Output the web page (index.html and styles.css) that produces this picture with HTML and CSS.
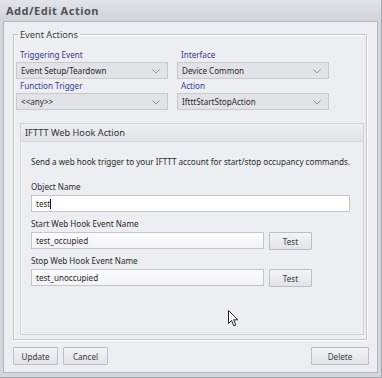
FILE: index.html
```html
<!DOCTYPE html>
<html lang="en">
<head>
    <meta charset="UTF-8">
    <meta name="viewport" content="width=device-width, initial-scale=1.0">
    <title>Add/Edit Action</title>
    <link rel="stylesheet" href="styles.css">
</head>
<body>
    <div class="window">
        <div class="titlebar">Add/Edit Action</div>
        <div class="client">
            <fieldset class="group">
                <legend>Event Actions</legend>
                <div class="fields">
                    <div class="field">
                        <div class="field-label">Triggering Event</div>
                        <div class="select">Event Setup/Teardown
                            <svg class="chevron" width="8" height="5" viewBox="0 0 8 5"><path d="M0.5 0.5 L4 4 L7.5 0.5" fill="none" stroke="#8d9096" stroke-width="1"/></svg>
                        </div>
                    </div>
                    <div class="field">
                        <div class="field-label">Interface</div>
                        <div class="select">Device Common
                            <svg class="chevron" width="8" height="5" viewBox="0 0 8 5"><path d="M0.5 0.5 L4 4 L7.5 0.5" fill="none" stroke="#8d9096" stroke-width="1"/></svg>
                        </div>
                    </div>
                    <div class="field">
                        <div class="field-label">Function Trigger</div>
                        <div class="select">&lt;&lt;any&gt;&gt;
                            <svg class="chevron" width="8" height="5" viewBox="0 0 8 5"><path d="M0.5 0.5 L4 4 L7.5 0.5" fill="none" stroke="#8d9096" stroke-width="1"/></svg>
                        </div>
                    </div>
                    <div class="field">
                        <div class="field-label">Action</div>
                        <div class="select">IftttStartStopAction
                            <svg class="chevron" width="8" height="5" viewBox="0 0 8 5"><path d="M0.5 0.5 L4 4 L7.5 0.5" fill="none" stroke="#8d9096" stroke-width="1"/></svg>
                        </div>
                    </div>
                </div>

                <div class="panel">
                    <div class="panel-head">IFTTT Web Hook Action</div>
                    <div class="panel-body">
                        <p class="desc">Send a web hook trigger to your IFTTT account for start/stop occupancy commands.</p>
                        <div class="label">Object Name</div>
                        <div class="input input-wide">test<span class="caret"></span></div>
                        <div class="label">Start Web Hook Event Name</div>
                        <div class="row">
                            <div class="input input-short">test_occupied</div>
                            <button class="btn btn-test">Test</button>
                        </div>
                        <div class="label">Stop Web Hook Event Name</div>
                        <div class="row">
                            <div class="input input-short">test_unoccupied</div>
                            <button class="btn btn-test">Test</button>
                        </div>
                    </div>
                </div>
            </fieldset>

            <div class="actions">
                <button class="btn">Update</button>
                <button class="btn">Cancel</button>
                <span class="spacer"></span>
                <button class="btn btn-delete">Delete</button>
            </div>
        </div>

        <svg class="cursor" width="11" height="17" viewBox="0 0 11 17">
            <path d="M0.5 0.5 L0.5 13.5 L3.5 10.5 L5.8 15.8 L7.8 14.9 L5.6 9.8 L9.8 9.8 Z" fill="#fff" stroke="#222" stroke-width="1" stroke-linejoin="round"/>
        </svg>
    </div>
</body>
</html>
```

FILE: styles.css
```css
body{
    margin: 0;
    padding: 0;
    font-family: "Noto Sans", "Open Sans", sans-serif;
    font-size: 8.1px;
    color: #2a2a2a;
}
.window{
    position: relative;
    width: 382px;
    height: 378px;
    box-sizing: border-box;
    background: #d3d6db;
    border-right: 1px solid #a4a8b0;
    border-bottom: 1px solid #a4a8b0;
}
.titlebar{
    height: 21px;
    line-height: 21px;
    padding-left: 6px;
    font-size: 11px;
    font-weight: bold;
    letter-spacing: 0.5px;
    color: #505256;
    background: linear-gradient(#e2e4e8, #d0d3d8);
}
.client{
    box-sizing: border-box;
    height: 352px;
    margin: 0 3px 0 3px;
    background: #eceef1;
    border: 1px solid #b3b7be;
}

/* group box */
.group{
    margin: 6px 10px 0 9px;
    padding: 0 0 3px 0;
    min-width: 0;
    height: 312px;
    box-sizing: border-box;
    border: 1px solid #c3c6cc;
    box-shadow: inset 1px 1px 0 #fff, 1px 1px 0 #fff;
}
.group legend{
    margin-left: 4px;
    padding: 0 2px;
    line-height: 13px;
    font-size: 9.2px;
    color: #3a3a3a;
}
.fields{
    display: grid;
    grid-template-columns: 152px 152px;
    column-gap: 9px;
    padding: 7px 0 0 2px;
}
.field-label{
    height: 14px;
    line-height: 14px;
    padding-left: 4px;
    color: #343a92;
}
.select{
    position: relative;
    box-sizing: border-box;
    height: 17px;
    line-height: 15px;
    padding-left: 4px;
    background: #e2e3e7;
    border: 1px solid #c7c9ce;
}
.chevron{
    position: absolute;
    right: 7px;
    top: 6px;
}

/* inner panel */
.panel{
    margin: 13px 2px 0 6px;
    height: 212px;
    box-sizing: border-box;
    border: 1px solid #d0d3d8;
    box-shadow: inset 1px 1px 0 #f7f8fa;
}
.panel-head{
    height: 17px;
    line-height: 17px;
    padding-left: 4px;
    font-size: 9.2px;
    background: linear-gradient(#eceef1, #e1e3e7);
    border-bottom: 1px solid #d6d8dc;
    color: #333;
}
.panel-body{
    padding: 0 13px 0 10px;
}
.desc{
    margin: 13px 0 11px 0;
    line-height: 14px;
    white-space: nowrap;
}
.label{
    height: 14px;
    line-height: 14px;
    margin-bottom: 1px;
}
.input{
    box-sizing: border-box;
    height: 17px;
    line-height: 15px;
    padding-left: 4px;
    border: 1px solid #c3c6cb;
    background: #fff;
    margin-bottom: 5px;
}
.input-short{
    width: 233px;
    background: linear-gradient(#fbfbfc, #f3f4f6);
}
.caret{
    display: inline-block;
    width: 1px;
    height: 10px;
    background: #111;
    vertical-align: -2px;
}
.row{
    display: flex;
    gap: 5px;
}

/* buttons */
.btn{
    box-sizing: border-box;
    height: 18px;
    width: 45px;
    padding: 0;
    font-family: inherit;
    font-size: 8.1px;
    color: #3a3a3a;
    background: linear-gradient(#f3f4f6, #e1e3e7);
    border: 1px solid #bcc0c6;
    border-radius: 1px;
}
.btn-test{
    width: 43px;
}
.btn-delete{
    width: 58px;
}
.actions{
    display: flex;
    gap: 5px;
    margin: 7px 8px 0 9px;
}
.spacer{
    flex: 1;
}

.cursor{
    position: absolute;
    left: 228px;
    top: 310px;
}
```
